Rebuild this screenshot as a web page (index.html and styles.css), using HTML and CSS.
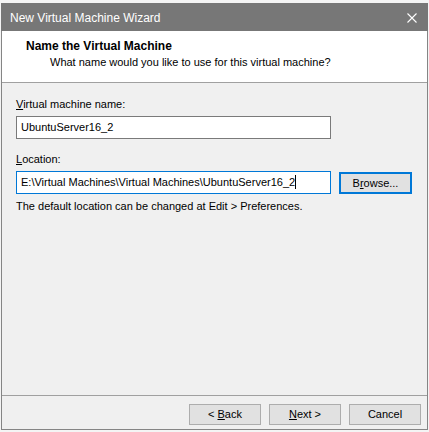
FILE: index.html
```html
<!DOCTYPE html>
<html>
<head>
<meta charset="utf-8">
<link rel="stylesheet" href="styles.css">
</head>
<body>
<div class="window">
  <div class="titlebar">
    <span class="title">New Virtual Machine Wizard</span>
    <svg class="close" width="10" height="10" viewBox="0 0 10 10"><path d="M0.5 0.5 L9.5 9.5 M9.5 0.5 L0.5 9.5" stroke="#fff" stroke-width="1.1" fill="none"/></svg>
  </div>
  <div class="header">
    <div class="h-title">Name the Virtual Machine</div>
    <div class="h-sub">What name would you like to use for this virtual machine?</div>
  </div>
  <div class="body">
    <div class="label"><u>V</u>irtual machine name:</div>
    <div class="input name-input">UbuntuServer16_2</div>
    <div class="label loc-label"><u>L</u>ocation:</div>
    <div class="loc-row">
      <div class="input loc-input">E:\Virtual Machines\Virtual Machines\UbuntuServer16_2<span class="caret"></span></div>
      <div class="btn browse">B<u>r</u>owse...</div>
    </div>
    <div class="hint">The default location can be changed at Edit &gt; Preferences.</div>
  </div>
  <div class="footer">
    <div class="btn">&lt; <u>B</u>ack</div>
    <div class="btn"><u>N</u>ext &gt;</div>
    <div class="btn cancel">Cancel</div>
  </div>
</div>
</body>
</html>
```
FILE: styles.css
```css
html, body {
  margin: 0;
  padding: 0;
}
body {
  width: 429px;
  height: 432px;
  background: #f4f4f4;
  font-family: "Liberation Sans", Arial, sans-serif;
  font-size: 11px;
  color: #000;
  overflow: hidden;
}
.window {
  margin: 3px 0 0 1px;
  width: 427px;
  height: 427px;
  box-sizing: border-box;
  border: 1px solid #858585;
  border-top: none;
  background: #f0f0f0;
  display: flex;
  flex-direction: column;
}
.titlebar {
  height: 28px;
  margin: 0 -1px;
  background: #777777;
  color: #fff;
  display: flex;
  align-items: center;
  padding: 0 0 0 9px;
  flex-shrink: 0;
  font-size: 12px;
}
.title {
  flex: 1;
  line-height: 16px;
  padding-top: 1px;
}
.close {
  margin-right: 11px;
  margin-top: 1px;
}
.header {
  height: 52px;
  background: #fff;
  border-bottom: 1px solid #a0a0a0;
  padding: 7px 0 0 24px;
  box-sizing: border-box;
  flex-shrink: 0;
}
.h-title {
  font-weight: bold;
  font-size: 12px;
  line-height: 16px;
}
.h-sub {
  padding-left: 24px;
  line-height: 16px;
}
.body {
  flex: 1;
  padding: 14px 0 0 14px;
  display: flex;
  flex-direction: column;
  align-items: flex-start;
}
.label {
  line-height: 15px;
}
.input {
  box-sizing: border-box;
  width: 315px;
  height: 23px;
  border: 1px solid #7a7a7a;
  background: #fff;
  padding: 0 0 0 4px;
  line-height: 21px;
  white-space: nowrap;
  overflow: hidden;
}
.name-input {
  margin-top: 4px;
}
.loc-label {
  margin-top: 13px;
}
.loc-row {
  margin-top: 4px;
  display: flex;
  align-items: center;
  gap: 8px;
}
.loc-input {
  border-color: #0078d7;
}
.caret {
  display: inline-block;
  width: 1px;
  height: 14px;
  background: #000;
  vertical-align: -3px;
}
.btn {
  box-sizing: border-box;
  width: 73px;
  height: 21px;
  border: 1px solid #adadad;
  background: #e1e1e1;
  text-align: center;
  line-height: 19px;
}
.browse {
  height: 22px;
  border: 2px solid #0078d7;
  line-height: 18px;
}
.hint {
  margin-top: 5px;
  line-height: 15px;
}
.footer {
  border-top: 1px solid #a0a0a0;
  height: 34px;
  flex-shrink: 0;
  display: flex;
  justify-content: flex-end;
  align-items: flex-start;
  padding: 8px 6px 0 0;
  gap: 8px;
  box-sizing: border-box;
}
.footer .btn {
  width: 72px;
}
```
